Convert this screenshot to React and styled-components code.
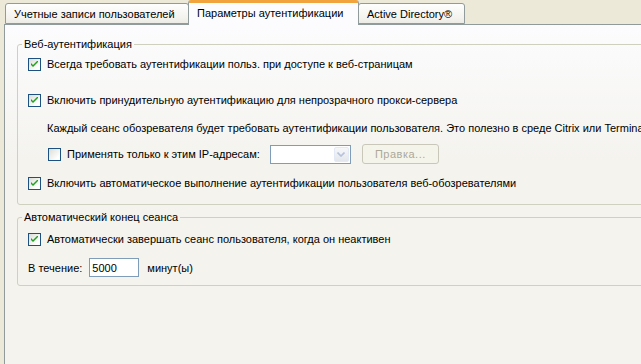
import styled, { createGlobalStyle } from "styled-components";

const GlobalStyle = createGlobalStyle`
  html, body {
    margin: 0;
    padding: 0;
    overflow: hidden;
    background: #ece9d8;
    font-family: "Liberation Sans", Arial, sans-serif;
    font-size: 11px;
    color: #000;
  }
`;

const Window = styled.div`
  width: 641px;
  height: 364px;
  padding-left: 4px;
  box-sizing: border-box;
  overflow: hidden;
`;

const TabStrip = styled.div`
  display: flex;
  align-items: flex-end;
  height: 24px;
  padding-left: 1px;
`;

const Tab = styled.div`
  position: relative;
  box-sizing: border-box;
  height: ${(p) => (p.$active ? "25px" : "21px")};
  margin-bottom: ${(p) => (p.$active ? "-1px" : "0")};
  margin-left: ${(p) => (p.$active ? "-1px" : "0")};
  margin-right: ${(p) => (p.$active ? "-1px" : "0")};
  z-index: ${(p) => (p.$active ? 2 : 1)};
  padding: 3px 8px 0;
  border: 1px solid #919b9c;
  border-bottom: ${(p) => (p.$active ? "none" : "1px solid #919b9c")};
  border-top: ${(p) => (p.$active ? "3px solid #f1a33d" : "1px solid #919b9c")};
  border-radius: 3px 3px 0 0;
  background: ${(p) =>
    p.$active ? "#fcfcfe" : "linear-gradient(#fefefe, #f4f3ee 70%, #ecebe6)"};
  white-space: nowrap;
  line-height: 14px;
  width: ${(p) => p.$w}px;
`;

const Panel = styled.div`
  width: 700px;
  height: 340px;
  box-sizing: border-box;
  border-left: 1px solid #919b9c;
  border-top: 1px solid #919b9c;
  background: linear-gradient(#fcfcfe, #f4f3ee 40%, #f4f3ee);
  padding: 13px 12px 0 12px;
`;

const Group = styled.fieldset`
  margin: ${(p) => p.$top || 0}px 0 0 0;
  padding: 0;
  min-width: 0;
  border: 1px solid #d0d0bf;
  border-radius: 3px;
`;

const Legend = styled.legend`
  margin-left: 4px;
  padding: 0 2px;
  line-height: 13px;
`;

const GroupBody = styled.div`
  padding: ${(p) => p.$pad};
`;

const Row = styled.div`
  display: flex;
  align-items: center;
  height: ${(p) => p.$h || 18}px;
  margin-top: ${(p) => p.$mt || 0}px;
  padding-left: ${(p) => p.$indent || 0}px;
  white-space: nowrap;
`;

const Box = styled.span`
  flex: none;
  width: 13px;
  height: 13px;
  box-sizing: border-box;
  border: 1px solid #1c5180;
  background: linear-gradient(135deg, #dcdcd7, #ffffff 80%);
  margin-right: 6px;
  display: flex;
  align-items: center;
  justify-content: center;
`;

const Label = styled.span`
  color: ${(p) => (p.$disabled ? "#aca899" : "#000")};
`;

const Combo = styled.div`
  display: flex;
  width: 81px;
  height: 19px;
  box-sizing: border-box;
  border: 1px solid #7f9db9;
  background: #fff;
  margin-left: ${(p) => p.$ml}px;
  padding: 1px;
  justify-content: flex-end;
`;

const ComboArrow = styled.span`
  width: 15px;
  height: 15px;
  box-sizing: border-box;
  border: 1px solid #e3e9f5;
  border-radius: 2px;
  background: linear-gradient(#f6f7f9, #e3e6ec);
  display: flex;
  align-items: center;
  justify-content: center;
`;

const Button = styled.div`
  width: 77px;
  height: 20px;
  box-sizing: border-box;
  border: 1px solid #c9c7ba;
  border-radius: 3px;
  background: #f5f4ea;
  color: #aca899;
  display: flex;
  align-items: center;
  justify-content: center;
  margin-left: 11px;
  letter-spacing: 0.5px;
`;

const NumberInput = styled.div`
  width: 50px;
  height: 19px;
  box-sizing: border-box;
  border: 1px solid #7f9db9;
  background: #fff;
  padding: 0 2px;
  display: flex;
  align-items: center;
  margin: 0 8px 0 7px;
`;

function Check({ checked }) {
  return (
    <Box>
      {checked && (
        <svg width="7" height="7" viewBox="0 0 7 7">
          <path d="M0 2 L0 4 L2 6 L7 1 L7 -1 L2 4 Z" fill="#21a121" />
        </svg>
      )}
    </Box>
  );
}

function CheckRow({ checked, text, mt, indent, h, children }) {
  return (
    <Row $mt={mt} $indent={indent} $h={h}>
      <Check checked={checked} />
      <Label>{text}</Label>
      {children}
    </Row>
  );
}

export default function App() {
  return (
    <>
      <GlobalStyle />
      <Window>
        <TabStrip>
          <Tab $w={184}>Учетные записи пользователей</Tab>
          <Tab $active $w={171}>Параметры аутентификации</Tab>
          <Tab $w={107}>Active Directory®</Tab>
        </TabStrip>
        <Panel>
          <Group>
            <Legend>Веб-аутентификация</Legend>
            <GroupBody $pad="4px 0 12px 10px">
              <CheckRow
                checked
                text="Всегда требовать аутентификации польз. при доступе к веб-страницам"
              />
              <CheckRow
                checked
                mt={18}
                text="Включить принудительную аутентификацию для непрозрачного прокси-сервера"
              />
              <Row $mt={10} $indent={19}>
                <Label>
                  Каждый сеанс обозревателя будет требовать аутентификации пользователя. Это
                  полезно в среде Citrix или Terminal Server.
                </Label>
              </Row>
              <CheckRow
                mt={7}
                indent={20}
                h={20}
                text="Применять только к этим IP-адресам:"
              >
                <Combo $ml={10}>
                  <ComboArrow>
                    <svg width="8" height="5" viewBox="0 0 8 5">
                      <path d="M0.5 0.5 L4 4 L7.5 0.5" fill="none" stroke="#b6c2dc" strokeWidth="1.6" />
                    </svg>
                  </ComboArrow>
                </Combo>
                <Button>Правка...</Button>
              </CheckRow>
              <CheckRow
                checked
                mt={10}
                text="Включить автоматическое выполнение аутентификации пользователя веб-обозревателями"
              />
            </GroupBody>
          </Group>
          <Group $top={6}>
            <Legend>Автоматический конец сеанса</Legend>
            <GroupBody $pad="6px 0 8px 10px">
              <CheckRow
                checked
                text="Автоматически завершать сеанс пользователя, когда он неактивен"
              />
              <Row $mt={10} $h={19}>
                <Label>В течение:</Label>
                <NumberInput>5000</NumberInput>
                <Label>минут(ы)</Label>
              </Row>
            </GroupBody>
          </Group>
        </Panel>
      </Window>
    </>
  );
}
